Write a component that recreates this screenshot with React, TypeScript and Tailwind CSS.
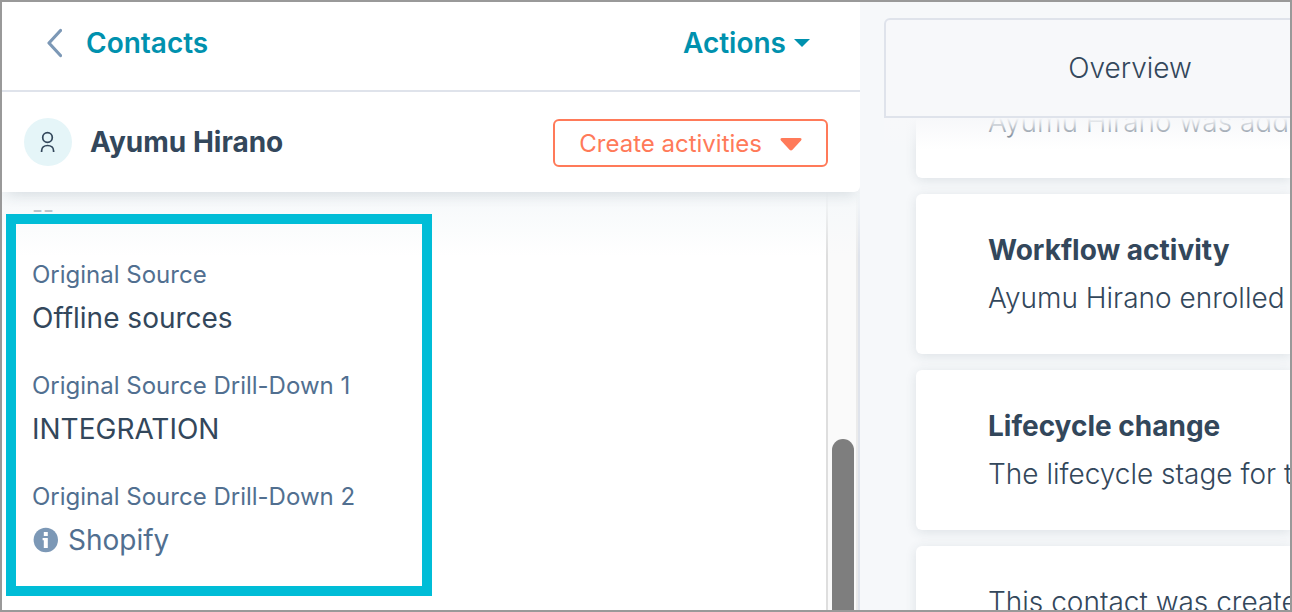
import React from 'react';

const properties = [
  { label: 'Original Source', value: 'Offline sources' },
  { label: 'Original Source Drill-Down 1', value: 'INTEGRATION' },
  { label: 'Original Source Drill-Down 2', value: 'Shopify', info: true },
];

const activities = [
  { text: 'Ayumu Hirano was added' },
  { title: 'Workflow activity', text: 'Ayumu Hirano enrolled' },
  { title: 'Lifecycle change', text: 'The lifecycle stage for this' },
  { text: 'This contact was created' },
];

const InfoIcon = () => (
  <svg width="26" height="26" viewBox="0 0 26 26" aria-hidden="true">
    <circle cx="13.8" cy="13" r="12.2" fill="#7c98b6" />
    <path d="M11.800 5h4v4h-4zM10.600 11h5.200v10h-4v-7.800h-1.200z" fill="#fff" />
  </svg>
);

const ContactPanel = () => {
  return (
    <aside className="flex basis-[858px] shrink-0 flex-col overflow-hidden">
      <div className="flex h-[90px] shrink-0 items-center justify-between border-b-2 border-[#dfe3eb] bg-white pl-[43px] pr-[50px] pb-1.5 text-[28px] font-semibold text-[#0091ae]">
        <a href="#contacts" className="flex items-center gap-6">
          <svg width="17" height="30" viewBox="0 0 17 30" fill="none" aria-hidden="true">
            <path d="M15.500 2.500L4 15l11.500 12.500" stroke="#7c98b6" strokeWidth="3.2" strokeLinecap="round" strokeLinejoin="round" />
          </svg>
          Contacts
        </a>
        <button type="button" className="flex items-center gap-2">
          Actions
          <svg width="16" height="8" viewBox="0 0 16 8" aria-hidden="true">
            <path d="M0 0h16L8 8z" fill="#0091ae" />
          </svg>
        </button>
      </div>

      <div className="relative z-20 flex h-[100px] shrink-0 items-center justify-between rounded-br-md bg-white pl-[22px] pr-8 shadow-[0_8px_14px_-5px_rgba(45,62,80,0.14)]">
        <div className="flex items-center gap-[18px]">
          <div className="flex size-12 items-center justify-center rounded-full bg-[#e5f5f8]">
            <svg width="16" height="22" viewBox="0 0 16 22" fill="none" stroke="#33475b" strokeWidth="1.7" aria-hidden="true">
              <circle cx="7.5" cy="6.5" r="4.8" />
              <path d="M1.6 21v-1c0-3.400 2.500-5.500 6-5.500s6 2.100 6 5.500v1" />
            </svg>
          </div>
          <h1 className="text-[28px] font-bold">Ayumu Hirano</h1>
        </div>
        <button type="button" className="mt-0.5 flex h-12 items-center gap-[18px] rounded-md border-2 border-[#ff7a59] px-6 pt-0.5 text-[24px] text-[#ff7a59]">
          Create activities
          <svg width="22" height="13" viewBox="0 0 22 13" aria-hidden="true">
            <path d="M2 0h18c1.500 0 2 1.400 1 2.500l-8.500 9.300c-.9.900-2.100.9-3 0L1 2.500C0 1.400.5 0 2 0z" fill="#ff7a59" />
          </svg>
        </button>
      </div>

      <div className="relative flex min-h-0 flex-1 bg-white">
        <div className="min-w-0 flex-1 overflow-hidden">
          <p className="h-[22px] pl-[30px] text-[24px] leading-9 text-[#33475b]">--</p>
          <dl className="relative z-10 ml-1 w-[426px] border-10 border-[#00bdd7] px-4 pt-[35px] pb-[26px]">
            {properties.map((item) => (
              <div key={item.label} className="mb-8 last:mb-0">
                <dt className="text-[24px] leading-8 text-[#516f90]">{item.label}</dt>
                <dd className={item.info ? 'mt-[7px] flex items-center gap-[10px] text-[28px] leading-10 text-[#516f90]' : 'mt-[7px] text-[28px] leading-10'}>
                  {item.info && <InfoIcon />}
                  {item.value}
                </dd>
              </div>
            ))}
          </dl>
        </div>
        <div className="w-8 shrink-0 overflow-hidden border-x-2 border-l-[#dedede] border-r-[#ebebeb] bg-[#fafafa] pt-[247px] pr-[2px] pl-1">
          <div className="h-full rounded-t-full bg-[#7e7e7e]" />
        </div>
        <div className="w-[2px] shrink-0 bg-[#dfe3eb]" />
        <div className="pointer-events-none absolute inset-x-0 top-0 h-16 bg-linear-to-b from-[#f5f8fa] to-transparent" />
      </div>
    </aside>
  );
};

const Timeline = () => {
  return (
    <main className="flex min-w-0 flex-1 flex-col overflow-hidden pt-4 pl-6">
      <div role="tablist" className="relative z-10 flex h-[100px] w-[492px] shrink-0 rounded-t-md border-2 border-[#dfe3eb] bg-[#f7f8fa]">
        <button type="button" role="tab" aria-selected="true" className="flex-1 text-[28px] font-light">
          Overview
        </button>
      </div>
      <div className="relative min-h-0 flex-1">
        <div className="-mt-[52px] flex flex-col gap-4 pl-8">
          {activities.map((item) => (
            <article key={item.text} className="rounded-l-md bg-white py-8 pl-[72px] text-[28px] leading-12 whitespace-nowrap shadow-[0_2px_12px_rgba(45,62,80,0.12)]">
              {item.title && <h2 className="font-bold">{item.title}</h2>}
              <p className="overflow-hidden font-light">{item.text}</p>
            </article>
          ))}
        </div>
        <div className="pointer-events-none absolute inset-x-0 top-0 h-8 bg-linear-to-b from-[#f7f8fa] to-transparent" />
      </div>
    </main>
  );
};

const App = () => {
  return (
    <div className="flex h-screen overflow-hidden border-2 border-[#999] bg-[#f6f8fa] font-[Inter,sans-serif] text-[#33475b]">
      <ContactPanel />
      <Timeline />
    </div>
  );
};

export default App;
